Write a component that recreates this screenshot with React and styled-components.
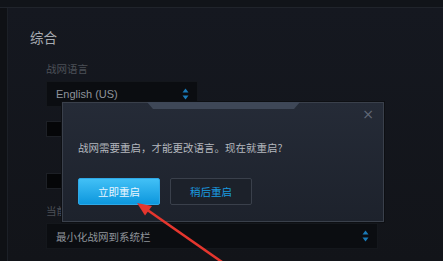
import React from 'react';
import styled, { createGlobalStyle } from 'styled-components';

const GlobalStyle = createGlobalStyle`
  html, body {
    margin: 0;
    padding: 0;
    background: #13161c;
  }
  body {
    font-family: "Liberation Sans", "Noto Sans CJK SC", sans-serif;
  }
`;

const Screen = styled.div`
  position: relative;
  width: 443px;
  height: 261px;
  overflow: hidden;
  background: #13161c;
  display: flex;
  flex-direction: column;
`;

const TopBar = styled.div`
  height: 7px;
  flex-shrink: 0;
  background: #111419;
  border-bottom: 1px solid #20242b;
`;

const Body = styled.div`
  flex: 1;
  display: flex;
`;

const Sidebar = styled.div`
  width: 7px;
  flex-shrink: 0;
  background: #0f1115;
  border-right: 1px solid #1c2027;
`;

const Content = styled.div`
  flex: 1;
  padding: 20px 0 0 22px;
  background: linear-gradient(180deg, #151820 0%, #121419 100%);
`;

const Heading = styled.h2`
  margin: 0 0 16px;
  font-family: "Noto Sans CJK SC", sans-serif;
  font-weight: 400;
  font-size: 13.5px;
  line-height: 18px;
  color: #a7abb1;
`;

const Section = styled.div`
  padding-left: 16px;
  display: flex;
  flex-direction: column;
`;

const Label = styled.div`
  font-family: "Noto Sans CJK SC", sans-serif;
  font-size: 10.5px;
  line-height: 14px;
  color: #4c5057;
  margin-top: ${p => p.$top || 0}px;
  margin-bottom: 5px;
`;

const Select = styled.div`
  width: ${p => p.$width}px;
  height: 26px;
  box-sizing: border-box;
  background: #0b0d11;
  border: 1px solid #14171c;
  display: flex;
  align-items: center;
  justify-content: space-between;
  padding: 0 8px 0 9px;
  font-family: ${p =>
    p.$cjk ? '"Noto Sans CJK SC", sans-serif' : '"Liberation Sans", "Noto Sans CJK SC", sans-serif'};
  font-size: ${p => (p.$cjk ? '10.5px' : '11px')};
  color: #8f949b;
`;

const Checkbox = styled.div`
  width: 16px;
  height: 16px;
  box-sizing: border-box;
  background: #050608;
  border: 1px solid #1d2026;
  margin-top: ${p => p.$top}px;
`;

const Arrows = () => (
  <svg width="7" height="12" viewBox="0 0 7 12">
    <path d="M3.5 0.5 L6.5 4.5 L0.5 4.5 Z" fill="#1a7ab8" />
    <path d="M3.5 11.5 L6.5 7.5 L0.5 7.5 Z" fill="#1a7ab8" />
  </svg>
);

const Dialog = styled.div`
  position: absolute;
  left: 62px;
  top: 102px;
  width: 322px;
  height: 120px;
  box-sizing: border-box;
  background: linear-gradient(180deg, #252b37 0%, #1d222c 100%);
  border: 1px solid #3a404b;
  box-shadow: 0 0 0 1px #0d0f13;
  padding: 37px 16px 0 15px;
`;

const Tab = styled.div`
  position: absolute;
  left: 84px;
  top: -1px;
  width: 153px;
  height: 7px;
  background: #3e4757;
  clip-path: polygon(0 0, 100% 0, calc(100% - 6px) 100%, 6px 100%);
`;

const Close = styled.div`
  position: absolute;
  right: 9px;
  top: 4px;
  font-family: "DejaVu Sans", sans-serif;
  font-size: 14px;
  line-height: 14px;
  color: #626976;
`;

const Message = styled.p`
  margin: 0;
  font-family: "Noto Sans CJK SC", sans-serif;
  font-size: 10.5px;
  line-height: 16px;
  color: #b4b8be;
`;

const Buttons = styled.div`
  display: flex;
  gap: 10px;
  margin-top: 22px;
`;

const Button = styled.div`
  width: 82px;
  height: 27px;
  box-sizing: border-box;
  border-radius: 2px;
  display: flex;
  align-items: center;
  justify-content: center;
  font-family: "Noto Sans CJK SC", sans-serif;
  font-size: 10.5px;
  color: ${p => (p.$primary ? '#eaf6ff' : '#1a9be0')};
  background: ${p =>
    p.$primary ? 'linear-gradient(180deg, #42c0f6 0%, #0d97dd 100%)' : '#1c212a'};
  border: 1px solid ${p => (p.$primary ? '#2fa8e6' : '#3a404b')};
`;

const Pointer = styled.svg`
  position: absolute;
  left: 0;
  top: 0;
  pointer-events: none;
`;

export default function App() {
  return (
    <>
      <GlobalStyle />
      <Screen>
        <TopBar />
        <Body>
          <Sidebar />
          <Content>
            <Heading>综合</Heading>
            <Section>
              <Label>战网语言</Label>
              <Select $width={152}>
                English (US)
                <Arrows />
              </Select>
              <Checkbox $top={14} />
              <Checkbox $top={36} />
              <Label $top={15}>当前关闭战网时</Label>
              <Select $width={332} $cjk>
                最小化战网到系统栏
                <Arrows />
              </Select>
            </Section>
          </Content>
        </Body>

        <Dialog>
          <Tab />
          <Close>×</Close>
          <Message>战网需要重启，才能更改语言。现在就重启?</Message>
          <Buttons>
            <Button $primary>立即重启</Button>
            <Button>稍后重启</Button>
          </Buttons>
        </Dialog>

        <Pointer width="443" height="261" viewBox="0 0 443 261">
          <line x1="146" y1="209" x2="222" y2="262" stroke="#e5362e" strokeWidth="2.6" />
          <path d="M137 203 L145 215.5 L152 206 Z" fill="#e5362e" />
        </Pointer>
      </Screen>
    </>
  );
}
